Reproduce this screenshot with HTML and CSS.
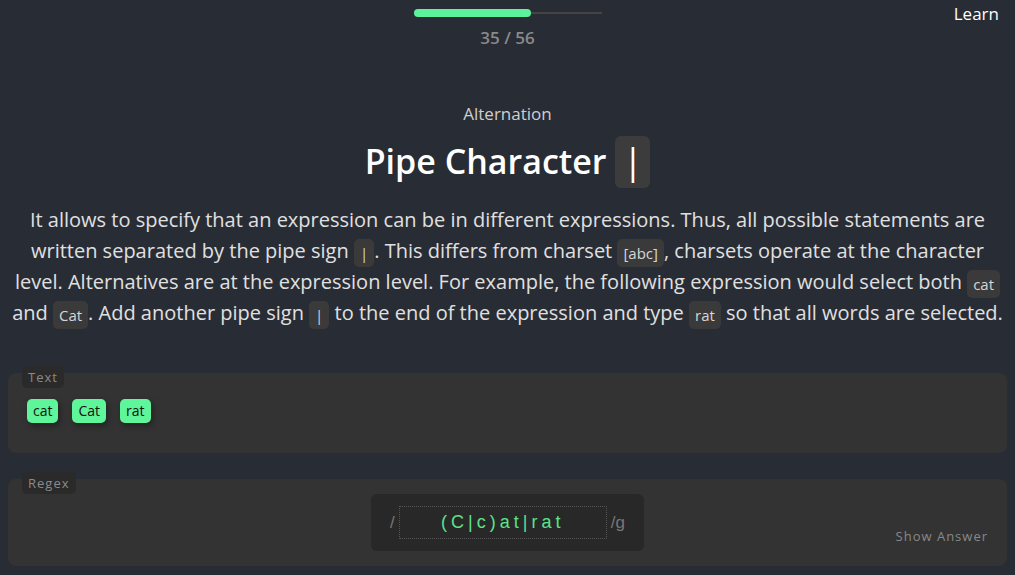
FILE: index.html
```html
<!DOCTYPE html>
<html>
<head>
<meta charset="utf-8">
<link rel="stylesheet" href="styles.css">
</head>
<body>
<header class="top">
  <div class="progress">
    <div class="track"><div class="fill" style="width:62.5%"></div></div>
    <div class="count">35 / 56</div>
  </div>
  <a class="learn">Learn</a>
</header>
<main class="lesson">
  <div class="sub">Alternation</div>
  <h1 class="title">Pipe Character <span class="big-code">|</span></h1>
  <p class="desc">It allows to specify that an expression can be in different expressions. Thus, all possible statements are written separated by the pipe sign <code>|</code>. This differs from charset <code>[abc]</code>, charsets operate at the character level. Alternatives are at the expression level. For example, the following expression would select both <code>cat</code> and <code>Cat</code>. Add another pipe sign <code>|</code> to the end of the expression and type <code>rat</code> so that all words are selected.</p>

  <section class="panel text-panel">
    <span class="label">Text</span>
    <div class="tags">
      <span class="tag">cat</span>
      <span class="tag">Cat</span>
      <span class="tag">rat</span>
    </div>
  </section>

  <section class="panel regex-panel">
    <span class="label">Regex</span>
    <div class="regex-row">
      <div class="regex-box">
        <span class="slash">/</span>
        <div class="regex-input">(C|c)at|rat</div>
        <span class="slash">/g</span>
      </div>
    </div>
    <div class="answer">Show Answer</div>
  </section>
</main>
</body>
</html>
```

FILE: styles.css
```css
* { box-sizing: border-box; }
html, body { margin: 0; padding: 0; }
body {
  background: #282c34;
  font-family: "Open Sans", "Noto Sans", sans-serif;
  color: #e6e6e6;
  width: 1015px;
  height: 575px;
  overflow: hidden;
}
.top {
  position: relative;
  height: 60px;
  display: flex;
  justify-content: center;
}
.progress {
  padding-top: 10px;
  display: flex;
  flex-direction: column;
  align-items: center;
}
.track {
  width: 188px;
  height: 2px;
  background: #444;
  margin-top: 2px;
  position: relative;
}
.fill {
  position: absolute;
  left: 0;
  top: -3px;
  height: 8px;
  border-radius: 4px;
  background: #5bf29b;
}
.count {
  margin-top: 12px;
  font-size: 17px;
  font-weight: 600;
  color: #8a8a8a;
  line-height: 24px;
}
.learn {
  position: absolute;
  right: 16px;
  top: 2px;
  font-size: 17px;
  color: #fff;
  line-height: 24px;
}
.lesson {
  padding: 0 8px;
  display: flex;
  flex-direction: column;
  align-items: stretch;
}
.sub {
  margin-top: 42px;
  text-align: center;
  font-size: 17px;
  color: #cfcfcf;
  line-height: 24px;
}
.title {
  margin: 8px 0 0;
  text-align: center;
  font-size: 34px;
  font-weight: 600;
  color: #fff;
  line-height: 54px;
}
.big-code {
  display: inline-block;
  background: #3c3c3c;
  border-radius: 6px;
  width: 35px;
  height: 52px;
  line-height: 50px;
  font-size: 36px;
  font-weight: 400;
  vertical-align: middle;
  margin-bottom: 5px;
  text-align: center;
}
.desc {
  margin: 11px 0 0;
  text-align: center;
  font-size: 20px;
  line-height: 31px;
  color: #e0e0e0;
}
.desc code {
  font-family: "Open Sans", sans-serif;
  font-size: 15px;
  line-height: 18px;
  background: #3a3a3a;
  color: #d6d6d6;
  padding: 4px 6px;
  border-radius: 5px;
  vertical-align: -1px;
}
.panel {
  position: relative;
  background: #333333;
  border-radius: 8px;
}
.label {
  position: absolute;
  left: 14px;
  top: -7px;
  background: #2a2a2a;
  color: #8a8a8a;
  font-size: 13px;
  letter-spacing: 1px;
  padding: 3px 6px;
  line-height: 16px;
  border-radius: 5px;
}
.text-panel {
  margin-top: 45px;
  height: 80px;
  padding: 26px 19px 0;
}
.tags { display: flex; gap: 14px; }
.tag {
  background: #5ff59a;
  color: #111;
  font-size: 14px;
  padding: 0 6px;
  line-height: 24px;
  border-radius: 5px;
  box-shadow: 2px 3px 6px rgba(0,0,0,0.35);
}
.regex-panel {
  margin-top: 26px;
  height: 87px;
  padding-top: 15px;
}
.regex-row { display: flex; justify-content: center; }
.regex-box {
  background: #282828;
  border-radius: 6px;
  width: 273px;
  height: 57px;
  display: flex;
  align-items: center;
  padding: 0 19px;
  gap: 4px;
}
.slash {
  color: #777;
  font-size: 17px;
  font-family: "Liberation Sans", sans-serif;
}
.regex-input {
  flex: 1;
  height: 33px;
  border: 1px dotted #555;
  color: #5ce28d;
  font-family: "Liberation Sans", sans-serif;
  font-size: 18px;
  letter-spacing: 4px;
  text-align: center;
  line-height: 31px;
}
.answer {
  position: absolute;
  right: 19px;
  bottom: 21px;
  color: #888;
  font-size: 13px;
  letter-spacing: 1px;
}
```
